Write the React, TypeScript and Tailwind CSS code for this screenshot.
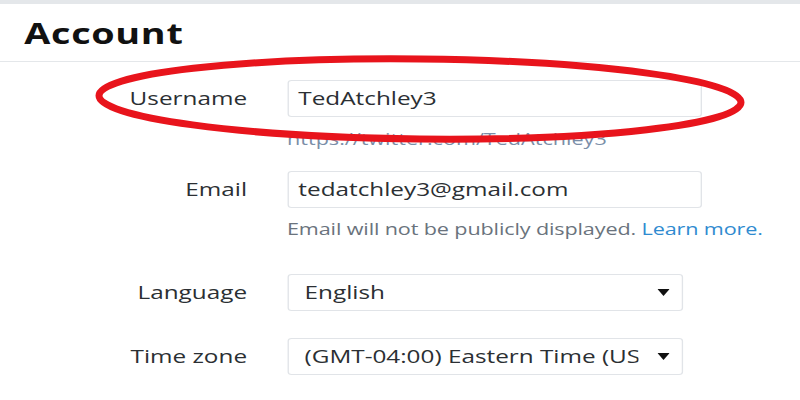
import React from "react";

const Caret = () => (
  <svg width="9" height="7" viewBox="0 0 9 7" className="shrink-0">
    <path d="M0 0 L9 0 L4.5 7 Z" fill="#111" />
  </svg>
);

export default function App() {
  return (
    <div className="relative w-[800px] h-[400px] bg-white overflow-hidden">
      <div
        className="w-[593px] h-[400px] origin-left scale-x-[1.35]"
        style={{ fontFamily: '"Open Sans", "Noto Sans", sans-serif' }}
      >
        <div className="h-[4px] bg-[#e4e7ea]" />
        <div className="h-[58px] flex items-center border-b border-[#e4e7ea] pl-[18px]">
          <h1 className="text-[28px] font-bold text-[#111] leading-none tracking-[0.5px]">Account</h1>
        </div>

        <div className="grid grid-cols-[183px_1fr] gap-x-[29.6px] pt-[18px] text-[18px] text-[#2b2f33]">
          <div className="h-[37px] flex items-center justify-end">Username</div>
          <div>
            <div className="w-[307px] h-[37px] border border-[#e1e4e8] rounded-[3px] flex items-center px-[7.4px]">
              TedAtchley3
            </div>
            <div className="h-[22px] mt-[11px] text-[16px] leading-[22px] text-[#7a8ea8] whitespace-nowrap">
              https://twitter.com/TedAtchley3
            </div>
          </div>

          <div className="h-[37px] flex items-center justify-end mt-[21px]">Email</div>
          <div className="mt-[21px]">
            <div className="w-[307px] h-[37px] border border-[#e1e4e8] rounded-[3px] flex items-center px-[7.4px]">
              tedatchley3@gmail.com
            </div>
            <div className="h-[22px] mt-[10px] text-[16px] leading-[22px] text-[#6a737d] whitespace-nowrap tracking-[-0.1px]">
              Email will not be publicly displayed. <span className="text-[#2f8bd0]">Learn more.</span>
            </div>
          </div>

          <div className="h-[37px] flex items-center justify-end mt-[34px]">Language</div>
          <div className="mt-[34px]">
            <div className="w-[293px] h-[37px] border border-[#e1e4e8] rounded-[3px] flex items-center justify-between pl-[12px] pr-[9px]">
              <span>English</span>
              <Caret />
            </div>
          </div>

          <div className="h-[37px] flex items-center justify-end mt-[27px]">Time zone</div>
          <div className="mt-[27px]">
            <div className="w-[293px] h-[37px] border border-[#e1e4e8] rounded-[3px] flex items-center justify-between pl-[12px] pr-[9px]">
              <span className="whitespace-nowrap overflow-hidden w-[247px]">(GMT-04:00) Eastern Time (US &amp; Canada)</span>
              <Caret />
            </div>
          </div>
        </div>
      </div>

      <svg className="absolute left-0 top-0 pointer-events-none" width="800" height="400">
        <ellipse cx="420" cy="99" rx="321" ry="40" fill="none" stroke="#e8141c" strokeWidth="7" transform="rotate(0.6 420 99)" />
      </svg>
    </div>
  );
}
